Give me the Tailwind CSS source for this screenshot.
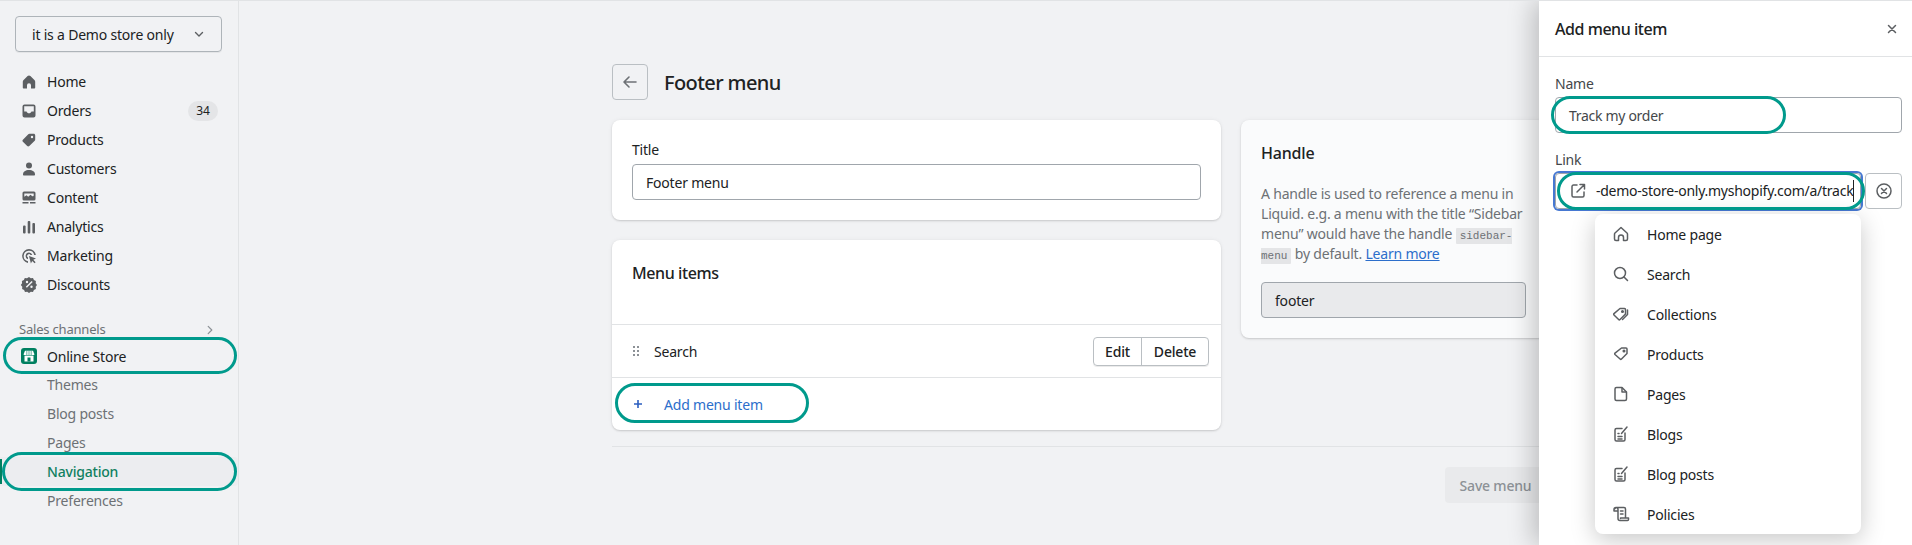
<!DOCTYPE html>
<html lang="en">
<head>
    <meta charset="UTF-8" />
    <meta name="viewport" content="width=device-width, initial-scale=1.0" />
    <title>Footer menu</title>
    <script src="https://cdn.jsdelivr.net/npm/@tailwindcss/browser@4"></script>
</head>
<body class="relative h-[545px] overflow-hidden bg-[#f1f2f4] border-t border-[#e1e3e5] font-['Noto_Sans',sans-serif] text-[14px] tracking-[-0.2px] text-[#202223]">

<div class="flex h-[544px]">
    <!-- Sidebar -->
    <aside class="w-[239px] shrink-0 border-r border-[#e1e3e5] pt-[15px]">
        <button class="ml-[15px] flex h-[36px] w-[207px] items-center justify-between rounded border border-[#aeb4b9] pl-[16px] pr-[15px] shadow-[0_1px_0_rgba(0,0,0,0.05)]">
            <span>it is a Demo store only</span>
            <svg width="14" height="14" viewBox="0 0 20 20" fill="none" stroke="#5c5f62" stroke-width="2" stroke-linecap="round" stroke-linejoin="round"><path d="M5 8l5 5 5-5"/></svg>
        </button>

        <nav class="mt-[15px]">
            <a class="flex h-[29px] items-center gap-2 pl-[19px]">
                <svg width="20" height="20" viewBox="0 0 20 20" fill="#5c5f62"><path d="M10 3.500c-.5 0-1 .2-1.400.6L4.600 8c-.5.5-.8 1.100-.8 1.800v5.700c0 .6.400 1 1 1h3.200v-3.200a2 2 0 0 1 4 0v3.200h3.200c.6 0 1-.4 1-1V9.800c0-.7-.3-1.300-.8-1.800l-4-3.900c-.4-.4-.9-.6-1.400-.6z"/></svg>
                <span>Home</span>
            </a>
            <a class="flex h-[29px] items-center gap-2 pl-[19px]">
                <svg width="20" height="20" viewBox="0 0 20 20" fill="#5c5f62"><path fill-rule="evenodd" d="M5.500 3.500h9a2 2 0 0 1 2 2v9a2 2 0 0 1-2 2h-9a2 2 0 0 1-2-2v-9a2 2 0 0 1 2-2zm-.300 1.700v5.300h2.300c.5 1.200 1.400 1.800 2.500 1.800s2-.6 2.500-1.800h2.300V5.200z"/></svg>
                <span>Orders</span>
                <span class="ml-auto mr-[20px] flex h-[20px] w-[30px] items-center justify-center rounded-full bg-[#e4e5e7] text-[12px]">34</span>
            </a>
            <a class="flex h-[29px] items-center gap-2 pl-[19px]">
                <svg width="20" height="20" viewBox="0 0 20 20" fill="#5c5f62"><path fill-rule="evenodd" d="M10.500 3.800h4.200c.8 0 1.500.7 1.500 1.500v4.200c0 .5-.2.900-.5 1.200l-5.400 5.400c-.6.600-1.500.6-2.100 0l-4.300-4.300c-.6-.6-.6-1.500 0-2.100l5.400-5.400c.3-.3.700-.5 1.200-.5zM13 8.200a1.200 1.200 0 1 0 0-2.400 1.200 1.200 0 0 0 0 2.400z"/></svg>
                <span>Products</span>
            </a>
            <a class="flex h-[29px] items-center gap-2 pl-[19px]">
                <svg width="20" height="20" viewBox="0 0 20 20" fill="#5c5f62"><circle cx="10" cy="6.500" r="3"/><path d="M4 15.500c0-2.800 2.500-4.500 6-4.500s6 1.700 6 4.500c0 .6-.4 1-1 1H5c-.6 0-1-.4-1-1z"/></svg>
                <span>Customers</span>
            </a>
            <a class="flex h-[29px] items-center gap-2 pl-[19px]">
                <svg width="20" height="20" viewBox="0 0 20 20" fill="#5c5f62"><path fill-rule="evenodd" d="M5 3.500h10a1.500 1.500 0 0 1 1.500 1.500v6a1.500 1.500 0 0 1-1.500 1.500H5A1.500 1.500 0 0 1 3.500 11V5A1.500 1.500 0 0 1 5 3.500zm.300 2v3.200l2.200-1.400 1.700 1.400 2.300-2 1.500 1.200a1 1 0 0 0 1.700-.5V5.500z"/><path d="M3.500 14h6v1.500h-6zM11 14h5.500v1.500H11z"/></svg>
                <span>Content</span>
            </a>
            <a class="flex h-[29px] items-center gap-2 pl-[19px]">
                <svg width="20" height="20" viewBox="0 0 20 20" fill="#5c5f62"><rect x="4" y="8.500" width="2.600" height="8" rx="1"/><rect x="8.700" y="4" width="2.600" height="12.500" rx="1"/><rect x="13.400" y="6" width="2.600" height="10.500" rx="1"/></svg>
                <span>Analytics</span>
            </a>
            <a class="flex h-[29px] items-center gap-2 pl-[19px]">
                <svg width="20" height="20" viewBox="0 0 20 20" fill="#5c5f62"><path d="M10 3a7 7 0 0 0-1 13.900v-1.700A5.300 5.300 0 1 1 15.200 9h1.700A7 7 0 0 0 10 3z"/><path d="M10 6.500a3.500 3.500 0 0 0-1 6.800V11.500a1.800 1.800 0 1 1 2.500-2.500h1.800A3.500 3.500 0 0 0 10 6.500z"/><path d="M10 10l7 2.500-2.700 1.300 2.300 2.400-1 1-2.400-2.300-1.300 2.700z"/></svg>
                <span>Marketing</span>
            </a>
            <a class="flex h-[29px] items-center gap-2 pl-[19px]">
                <svg width="20" height="20" viewBox="0 0 20 20" fill="#5c5f62"><path fill-rule="evenodd" d="M10 2.800l1.800 1.300 2.200-.2.900 2 2 .9-.2 2.200 1.300 1.800-1.300 1.800.2 2.200-2 .9-.9 2-2.200-.2-1.800 1.300-1.800-1.300-2.200.2-.9-2-2-.9.200-2.200L1.800 10.800 3.100 9l-.2-2.200 2-.9.9-2 2.200.2zM12.600 6.800l-5.800 5.800 1.100 1 5.800-5.800zM8 9a1.200 1.200 0 1 0 0-2.400A1.200 1.200 0 0 0 8 9zm4.500 4.800a1.200 1.200 0 1 0 0-2.400 1.200 1.200 0 0 0 0 2.400z" transform="translate(0 -.8)"/></svg>
                <span>Discounts</span>
            </a>
        </nav>

        <div class="mt-[22px] flex h-[17px] items-center justify-between pl-[19px] pr-[22px] text-[13px] text-[#6d7175]">
            <span>Sales channels</span>
            <svg width="12" height="12" viewBox="0 0 20 20" fill="none" stroke="#8c9196" stroke-width="2" stroke-linecap="round" stroke-linejoin="round"><path d="M7 4l6 6-6 6"/></svg>
        </div>

        <a class="mt-[4px] flex h-[28px] items-center gap-[10px] pl-[21px]">
            <span class="flex h-[16px] w-[16px] items-center justify-center rounded-[3px] bg-[#008060]">
                <svg width="12" height="12" viewBox="0 0 12 12"><path d="M2 .8h8l1.300 3.200v1H.700V4z" fill="#fff"/><path d="M3.800 1v4M6 1v4M8.200 1v4" stroke="#008060" stroke-width=".6"/><path d="M1.500 5.600h9V11.500h-9z" fill="#fff"/><rect x="4.500" y="7.500" width="3" height="4" fill="#008060"/></svg>
            </span>
            <span>Online Store</span>
        </a>
        <div class="text-[#6d7175]">
            <a class="flex h-[29px] items-center pl-[47px]">Themes</a>
            <a class="flex h-[29px] items-center pl-[47px]">Blog posts</a>
            <a class="flex h-[29px] items-center pl-[47px]">Pages</a>
            <a class="relative flex h-[29px] items-center rounded-r bg-[#ecedf0] pl-[47px] font-medium text-[#108060]">
                <span class="absolute left-0 top-[2px] h-[25px] w-[2px] bg-[#008060]"></span>
                Navigation
            </a>
            <a class="flex h-[29px] items-center pl-[47px]">Preferences</a>
        </div>
    </aside>

    <!-- Main column -->
    <main class="pl-[373px] pt-[63px]">
        <div class="w-[934px]">
            <header class="flex items-center gap-[16px]">
                <button class="flex h-[36px] w-[36px] items-center justify-center rounded border border-[#babfc3]">
                    <svg width="20" height="20" viewBox="0 0 20 20" fill="none" stroke="#6d7175" stroke-width="1.600" stroke-linecap="round" stroke-linejoin="round"><path d="M16 10H4.500M9 5l-5 5 5 5"/></svg>
                </button>
                <h1 class="pt-[1px] text-[20px] font-medium tracking-[-0.6px]">Footer menu</h1>
            </header>

            <div class="mt-[20px] grid grid-cols-[609px_305px] gap-[20px]">
                <div class="flex flex-col gap-[20px]">
                    <section class="rounded-lg bg-white p-[20px] shadow-[0_0_5px_rgba(23,24,24,0.05),0_1px_2px_rgba(0,0,0,0.15)]">
                        <label class="block h-[20px] leading-[20px]">Title</label>
                        <div class="mt-[4px] flex h-[36px] items-center rounded border border-[#a0a6ac] px-[13px]">Footer menu</div>
                    </section>
                    <section class="rounded-lg bg-white shadow-[0_0_5px_rgba(23,24,24,0.05),0_1px_2px_rgba(0,0,0,0.15)]">
                        <h2 class="h-[84px] px-[20px] pt-[21px] text-[16px] font-medium leading-[24px] tracking-[-0.4px]">Menu items</h2>
                        <div class="flex h-[54px] items-center border-y border-[#e1e3e5] pl-[21px] pr-[12px]">
                            <svg width="8" height="10" viewBox="0 0 8 10" fill="#8c9196"><rect x="0" y="0" width="2" height="2"/><rect x="4" y="0" width="2" height="2"/><rect x="0" y="4" width="2" height="2"/><rect x="4" y="4" width="2" height="2"/><rect x="0" y="8" width="2" height="2"/><rect x="4" y="8" width="2" height="2"/></svg>
                            <span class="ml-[13px]">Search</span>
                            <div class="ml-auto flex h-[29px] rounded border border-[#babfc3] font-medium shadow-[0_1px_0_rgba(0,0,0,0.08)]">
                                <span class="flex w-[48px] items-center justify-center border-r border-[#babfc3]">Edit</span>
                                <span class="flex w-[66px] items-center justify-center">Delete</span>
                            </div>
                        </div>
                        <a class="flex h-[52px] items-center pl-[20px] text-[#2c6ecb]">
                            <svg width="12" height="12" viewBox="0 0 12 12" fill="none" stroke="#2c5fc0" stroke-width="1.600"><path d="M6 2v8M2 6h8"/></svg>
                            <span class="ml-[20px]">Add menu item</span>
                        </a>
                    </section>
                </div>

                <section class="self-start rounded-lg bg-[#fafbfc] px-[20px] pb-[20px] pt-[21px] shadow-[0_0_5px_rgba(23,24,24,0.05),0_1px_2px_rgba(0,0,0,0.15)]">
                    <h2 class="text-[16px] font-medium leading-[24px]">Handle</h2>
                    <p class="mt-[19px] leading-[20px] text-[#6d7175]">A handle is used to reference a menu in Liquid. e.g. a menu with the title “Sidebar menu” would have the handle <code class="rounded-[1px] bg-[#e4e5e7] px-[4px] py-[2px] font-['Liberation_Mono',monospace] text-[11px] leading-none tracking-normal">sidebar-menu</code> by default. <a class="text-[#2c6ecb] underline">Learn more</a></p>
                    <div class="mt-[18px] flex h-[36px] items-center rounded border border-[#a0a6ac] bg-[#e9eaec] px-[13px]">footer</div>
                </section>
            </div>

            <div class="mt-[16px] border-t border-[#e1e3e5] pt-[20px]">
                <button class="ml-auto flex h-[36px] w-[101px] items-center justify-center rounded bg-[#e9eaec] font-medium text-[#8c9196]">Save menu</button>
            </div>
        </div>
    </main>
</div>

<!-- Add menu item panel -->
<aside class="absolute bottom-0 right-0 top-0 w-[373px] bg-white shadow-[-6px_0_24px_rgba(0,0,0,0.22)]">
    <div class="flex h-[56px] items-center justify-between border-b border-[#e1e3e5] pl-[16px] pr-[14px]">
        <h2 class="text-[16px] font-medium tracking-[-0.45px]">Add menu item</h2>
        <svg width="12" height="12" viewBox="0 0 12 12" fill="none" stroke="#5c5f62" stroke-width="1.500" stroke-linecap="round"><path d="M2.500 2.500l7 7M9.500 2.500l-7 7"/></svg>
    </div>
    <div class="pl-[16px] pr-[10px] pt-[17px]">
        <label class="block h-[20px] leading-[20px] text-[#44474a]">Name</label>
        <div class="mt-[3px] flex h-[36px] items-center rounded border border-[#a0a6ac] pl-[13px] text-[#44474a] tracking-[-0.3px]">Track my order</div>
        <label class="mt-[17px] block h-[20px] leading-[20px] text-[#44474a]">Link</label>
        <div class="relative mt-[3px] flex gap-[4px]">
            <div class="flex h-[36px] w-[306px] items-center rounded border border-[#a0a6ac] pl-[12px] ring-2 ring-[#4678d2]">
                <svg width="20" height="20" viewBox="0 0 20 20" fill="none" stroke="#5c5f62" stroke-width="1.500" stroke-linecap="round" stroke-linejoin="round"><path d="M9 4H5.500A1.500 1.500 0 0 0 4 5.500v9A1.500 1.500 0 0 0 5.500 16h9a1.500 1.500 0 0 0 1.500-1.500V11"/><path d="M12 3.500h4.500V8M16.500 3.500L9 11"/></svg>
                <span class="ml-[8px] border-r border-[#202223] leading-[22px] tracking-[-0.25px]">-demo-store-only.myshopify.com/a/track</span>
            </div>
            <button class="flex h-[36px] w-[37px] items-center justify-center rounded border border-[#babfc3]">
                <svg width="20" height="20" viewBox="0 0 20 20" fill="none" stroke="#5c5f62" stroke-width="1.500" stroke-linecap="round"><circle cx="10" cy="10" r="7"/><path d="M7.500 7.500l5 5M12.500 7.500l-5 5"/></svg>
            </button>

            <!-- Link suggestions -->
            <ul class="absolute left-[40px] top-[41px] w-[266px] rounded-lg bg-white shadow-[0_6px_24px_rgba(0,0,0,0.22)]">
                <li class="flex h-[40px] items-center gap-[16px] pl-[16px]">
                    <svg width="20" height="20" viewBox="0 0 20 20" fill="none" stroke="#5c5f62" stroke-width="1.500" stroke-linejoin="round"><path d="M10 3.500L4 9c-.4.400-.5.800-.5 1.300v4.700c0 .8.700 1.500 1.500 1.500h2.500v-3a2.500 2.500 0 0 1 5 0v3H15c.8 0 1.500-.7 1.500-1.500v-4.700c0-.5-.1-.9-.5-1.300z"/></svg>
                    <span>Home page</span>
                </li>
                <li class="flex h-[40px] items-center gap-[16px] pl-[16px]">
                    <svg width="20" height="20" viewBox="0 0 20 20" fill="none" stroke="#5c5f62" stroke-width="1.500" stroke-linecap="round"><circle cx="9" cy="9" r="5.500"/><path d="M13 13l3.500 3.500"/></svg>
                    <span>Search</span>
                </li>
                <li class="flex h-[40px] items-center gap-[16px] pl-[16px]">
                    <svg width="20" height="20" viewBox="0 0 20 20" fill="none" stroke="#5c5f62" stroke-width="1.500" stroke-linejoin="round"><path d="M9 4.500h4.500c.6 0 1 .4 1 1V10l-5.500 5.500c-.4.400-1 .400-1.400 0L3 11c-.4-.4-.4-1 0-1.400z"/><path d="M16.500 6v4.500l-5 5" stroke-linecap="round"/><circle cx="11.500" cy="7.500" r=".8" fill="#5c5f62"/></svg>
                    <span>Collections</span>
                </li>
                <li class="flex h-[40px] items-center gap-[16px] pl-[16px]">
                    <svg width="20" height="20" viewBox="0 0 20 20" fill="none" stroke="#5c5f62" stroke-width="1.500" stroke-linejoin="round"><path d="M10.500 4h4.500c.6 0 1 .4 1 1v4.500L10.500 15c-.4.400-1 .400-1.400 0L4 10.500c-.4-.4-.4-1 0-1.400z"/><circle cx="13" cy="7" r=".8" fill="#5c5f62"/></svg>
                    <span>Products</span>
                </li>
                <li class="flex h-[40px] items-center gap-[16px] pl-[16px]">
                    <svg width="20" height="20" viewBox="0 0 20 20" fill="none" stroke="#5c5f62" stroke-width="1.500" stroke-linejoin="round"><path d="M5.500 3.500H11l4.500 4.500v7c0 .800-.7 1.500-1.500 1.500H5.500c-.8 0-1.500-.7-1.500-1.500V5c0-.8.700-1.500 1.500-1.500z"/><path d="M11 3.500V8h4.500"/></svg>
                    <span>Pages</span>
                </li>
                <li class="flex h-[40px] items-center gap-[16px] pl-[16px]">
                    <svg width="20" height="20" viewBox="0 0 20 20" fill="none" stroke="#5c5f62" stroke-width="1.500" stroke-linecap="round" stroke-linejoin="round"><path d="M11 4.500H5.500c-.8 0-1.500.7-1.500 1.500v9.500c0 .8.700 1.500 1.500 1.500h7c.8 0 1.500-.7 1.500-1.500V9"/><path d="M10.500 9.500l5.500-6.500M7 12.500h4M7 15h4M7 9.500h1"/></svg>
                    <span>Blogs</span>
                </li>
                <li class="flex h-[40px] items-center gap-[16px] pl-[16px]">
                    <svg width="20" height="20" viewBox="0 0 20 20" fill="none" stroke="#5c5f62" stroke-width="1.500" stroke-linecap="round" stroke-linejoin="round"><path d="M11 4.500H5.500c-.8 0-1.500.7-1.500 1.500v9.500c0 .8.700 1.500 1.500 1.500h7c.8 0 1.500-.7 1.500-1.500V9"/><path d="M10.500 9.500l5.500-6.500M7 12.500h4M7 15h4M7 9.500h1"/></svg>
                    <span>Blog posts</span>
                </li>
                <li class="flex h-[40px] items-center gap-[16px] pl-[16px]">
                    <svg width="20" height="20" viewBox="0 0 20 20" fill="none" stroke="#5c5f62" stroke-width="1.500" stroke-linecap="round" stroke-linejoin="round"><path d="M3 5.500C3 4.400 3.900 3.500 5 3.500h8c.8 0 1.500.7 1.500 1.500v9M5 3.500c1.100 0 2 .9 2 2V7H3V5.500zM7 7v7.500c0 1.100.9 2 2 2h7.500c.6 0 1-.4 1-1V14H9.500v.500"/><path d="M9.500 7h2.500M9.500 10h2.500"/></svg>
                    <span>Policies</span>
                </li>
            </ul>
        </div>
    </div>
</aside>

<!-- Teal annotation ovals -->
<div class="absolute left-[3px] top-[336px] h-[37px] w-[234px] rounded-full border-[3.5px] border-[#009a8c]"></div>
<div class="absolute left-[2px] top-[451px] h-[39px] w-[235px] rounded-full border-[3.5px] border-[#009a8c]"></div>
<div class="absolute left-[615px] top-[382px] h-[40px] w-[194px] rounded-full border-[3.5px] border-[#009a8c]"></div>
<div class="absolute left-[1551px] top-[95px] h-[38px] w-[235px] rounded-full border-[3.5px] border-[#009a8c]"></div>
<div class="absolute left-[1557px] top-[171px] h-[38px] w-[308px] rounded-full border-[3.5px] border-[#009a8c]"></div>

</body>
</html>
